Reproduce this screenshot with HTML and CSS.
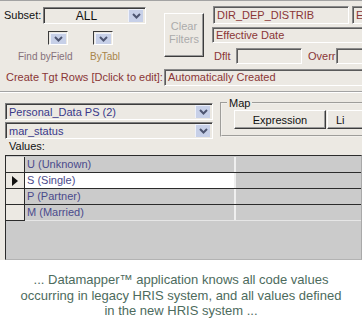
FILE: index.html
```html
<!DOCTYPE html>
<html lang="en">
<head>
  <meta charset="UTF-8" />
  <title>Datamapper</title>
  <link rel="stylesheet" href="styles.css">
</head>
<body>
  <div class="app">
    <div class="top">
      <div class="filters">
        <div class="subset-row">
          <span class="lbl subset-lbl">Subset:</span>
          <div class="combo subset">
            <span class="combo-text center">ALL</span>
            <span class="drop"><svg width="9" height="6" viewBox="0 0 9 6"><path d="M1 1 L4.5 4.5 L8 1" fill="none" stroke="#4e5672" stroke-width="2"/></svg></span>
          </div>
        </div>
        <div class="mini-row">
          <div class="mini"><span class="drop"><svg width="9" height="6" viewBox="0 0 9 6"><path d="M1 1 L4.5 4.5 L8 1" fill="none" stroke="#4e5672" stroke-width="2"/></svg></span></div>
          <div class="mini"><span class="drop"><svg width="9" height="6" viewBox="0 0 9 6"><path d="M1 1 L4.5 4.5 L8 1" fill="none" stroke="#4e5672" stroke-width="2"/></svg></span></div>
        </div>
        <div class="mini-labels">
          <span class="find">Find byField</span>
          <span class="bytabl">ByTabl</span>
        </div>
      </div>

      <button class="btn clear" disabled>Clear<br>Filters</button>

      <div class="fields">
        <div class="field-row r1">
          <div class="field dir">DIR_DEP_DISTRIB</div>
          <div class="field e">E</div>
        </div>
        <div class="field eff">Effective Date</div>
        <div class="field-row r3">
          <span class="lbl red dflt-lbl">Dflt</span>
          <div class="field dflt"></div>
          <span class="lbl red overr-lbl">Overr</span>
          <div class="field ov"></div>
        </div>
      </div>
    </div>

    <div class="tgt-row">
      <span class="lbl red tgt-lbl">Create Tgt Rows [Dclick to edit]:</span>
      <div class="field auto">Automatically Created</div>
    </div>

    <div class="sep"></div>

    <div class="mid">
      <div class="combos">
        <div class="combo wide">
          <span class="combo-text blue">Personal_Data PS (2)</span>
          <span class="drop"><svg width="9" height="6" viewBox="0 0 9 6"><path d="M1 1 L4.5 4.5 L8 1" fill="none" stroke="#4e5672" stroke-width="2"/></svg></span>
        </div>
        <div class="combo wide">
          <span class="combo-text blue">mar_status</span>
          <span class="drop"><svg width="9" height="6" viewBox="0 0 9 6"><path d="M1 1 L4.5 4.5 L8 1" fill="none" stroke="#4e5672" stroke-width="2"/></svg></span>
        </div>
      </div>
      <fieldset class="map">
        <legend>Map</legend>
        <div class="map-btns">
          <button class="btn expr">Expression</button>
          <button class="btn li">Li</button>
        </div>
      </fieldset>
    </div>

    <div class="values-lbl">Values:</div>

    <div class="grid">
      <div class="row gray">
        <div class="sel"></div>
        <div class="c1">U (Unknown)</div>
        <div class="c2"></div>
      </div>
      <div class="row current">
        <div class="sel"><span class="arrow"></span></div>
        <div class="c1">S (Single)</div>
        <div class="c2"></div>
      </div>
      <div class="row">
        <div class="sel"></div>
        <div class="c1">P (Partner)</div>
        <div class="c2"></div>
      </div>
      <div class="row last">
        <div class="sel"></div>
        <div class="c1">M (Married)</div>
        <div class="c2"></div>
      </div>
    </div>
  </div>

  <p class="caption">
    ... Datamapper™ application knows all code values<br>
    occurring in legacy HRIS system, and all values defined<br>
    in the new HRIS system ...
  </p>
</body>
</html>
```

FILE: styles.css
```css
body {
  margin: 0;
  background: #fff;
  font-family: "Liberation Sans", Arial, sans-serif;
  width: 362px;
}

.app {
  width: 362px;
  height: 260px;
  box-sizing: border-box;
  background: #ece9e3;
  border-top: 1px solid #a3a3a3;
  overflow: hidden;
  font-size: 11px;
}

.lbl {
  line-height: 13px;
  white-space: nowrap;
}

.red {
  color: #8a3636;
}

/* top block */
.top {
  display: flex;
  align-items: flex-start;
}

.filters {
  flex: none;
  width: 160px;
  padding-top: 6px;
}

.subset-row {
  display: flex;
  align-items: center;
  padding-left: 4px;
}

.subset-lbl {
  width: 39px;
  color: #111;
}

.combo {
  display: flex;
  align-items: center;
  box-sizing: border-box;
  height: 17px;
  border: 1px solid;
  border-color: #7d7d7d #fff #fff #7d7d7d;
  box-shadow: inset 1px 1px 0 #3c3c3c;
  padding: 1px 2px 1px 1px;
}

.combo-text {
  flex: 1;
  line-height: 14px;
  padding-left: 2px;
  white-space: nowrap;
}

.combo-text.center {
  text-align: center;
  color: #111;
  font-size: 12px;
  padding-left: 0;
}

.combo-text.blue {
  color: #38388a;
}

.subset {
  width: 103px;
}

.drop {
  display: flex;
  align-items: center;
  justify-content: center;
  flex: none;
  width: 15px;
  height: 13px;
  box-sizing: border-box;
  background: #c7d0e8;
  border-top: 1px solid #eef1fa;
  border-left: 1px solid #eef1fa;
}

.mini-row {
  display: flex;
  gap: 25px;
  margin-top: 7px;
  padding-left: 48px;
}

.mini {
  display: flex;
  align-items: center;
  justify-content: center;
  box-sizing: border-box;
  width: 20px;
  height: 14px;
  border: 1px solid;
  border-color: #3c3c3c #fff #fff #3c3c3c;
}

.mini .drop {
  width: 16px;
  height: 11px;
}

.mini-labels {
  display: flex;
  margin-top: 5px;
  padding-left: 18px;
  font-size: 10px;
  line-height: 13px;
}

.find {
  width: 72px;
  color: #857079;
}

.bytabl {
  color: #a8854a;
}

.btn {
  font-family: "Liberation Sans", Arial, sans-serif;
  font-size: 11px;
  background: #ece9e3;
  border: 1px solid;
  border-color: #fff #3c3c3c #3c3c3c #fff;
  box-shadow: inset -1px -1px 0 #9a9a9a;
  padding: 0;
  color: #111;
}

.clear {
  flex: none;
  width: 40px;
  height: 44px;
  margin: 12px 0 0 4px;
  line-height: 13px;
  padding-bottom: 4px;
  color: #ababab;
}

.fields {
  flex: none;
  width: 170px;
  margin-left: 8px;
}

.field {
  box-sizing: border-box;
  border: 1px solid;
  border-color: #8a8a8a #fff #fff #8a8a8a;
  box-shadow: inset 1px 1px 0 #5a5a5a;
  color: #8a3636;
  padding: 0 3px;
  white-space: nowrap;
  overflow: hidden;
}

.field-row {
  display: flex;
  align-items: center;
}

.r1 {
  margin-top: 5px;
}

.r1 .field {
  height: 18px;
  line-height: 16px;
}

.dir {
  margin-left: 1px;
  width: 137px;
}

.e {
  margin-left: 3px;
  width: 30px;
  flex: none;
}

.eff {
  margin-top: 3px;
  height: 16px;
  line-height: 14px;
  width: 170px;
}

.r3 {
  margin-top: 5px;
}

.r3 .field {
  height: 16px;
  flex: none;
}

.dflt-lbl {
  margin-left: 2px;
  width: 22px;
}

.dflt {
  width: 66px;
}

.overr-lbl {
  margin-left: 6px;
  width: 28px;
}

.ov {
  width: 40px;
}

.tgt-row {
  display: flex;
  align-items: center;
  margin-top: 5px;
  padding-left: 6px;
}

.tgt-lbl {
  flex: none;
  width: 158px;
}

.auto {
  flex: none;
  width: 200px;
  height: 17px;
  line-height: 15px;
}

.sep {
  margin-top: 5px;
  border-top: 1px solid #a3a3a3;
  border-bottom: 1px solid #fff;
}

/* middle */
.mid {
  display: flex;
  align-items: flex-start;
  margin-top: 4px;
}

.combos {
  display: flex;
  flex-direction: column;
  gap: 2px;
  flex: none;
  width: 208px;
  margin: 6px 0 0 5px;
}

.wide {
  width: 208px;
}

.map {
  flex: none;
  width: 150px;
  margin: 0 0 0 7px;
  padding: 1px 0 6px 12px;
  border: 2px groove #f2f0ec;
  box-sizing: border-box;
}

.map legend {
  padding: 0 2px;
  margin-left: -7px;
  line-height: 12px;
  color: #111;
}

.map-btns {
  display: flex;
  gap: 1px;
}

.expr {
  width: 92px;
  height: 19px;
  flex: none;
}

.li {
  width: 60px;
  height: 19px;
  flex: none;
  text-align: left;
  padding-left: 8px;
}

.values-lbl {
  margin-top: 1px;
  padding-left: 9px;
  line-height: 13px;
  color: #111;
}

/* values grid */
.grid {
  box-sizing: border-box;
  height: 105px;
  margin: 2px 0 0 5px;
  background: #cbcbcb;
  border-left: 1px solid #2b2b2b;
  border-top: 1px solid #2b2b2b;
  border-right: 1px solid #a9a9a9;
  border-bottom: 1px solid #b3b3b3;
}

.row {
  display: flex;
  box-sizing: border-box;
  height: 16px;
  border-bottom: 1px solid #2b2b2b;
  color: #4a4a8c;
  line-height: 15px;
}

.row:first-child {
  height: 17px;
  padding-top: 1px;
}

.sel {
  display: flex;
  align-items: center;
  justify-content: center;
  flex: none;
  width: 19px;
  box-sizing: border-box;
  background: #ece9e3;
  border-right: 1px solid #2b2b2b;
}

.arrow {
  width: 0;
  height: 0;
  border-left: 6px solid #111;
  border-top: 5px solid transparent;
  border-bottom: 5px solid transparent;
}

.c1 {
  flex: none;
  width: 211px;
  padding-left: 2px;
  box-sizing: border-box;
  border-right: 2px solid #efefef;
  white-space: nowrap;
}

.c2 {
  flex: 1;
}

.current .c1 {
  background: #fff;
}

.row.last {
  border-bottom-color: #e6e6e6;
}

.row.last .sel {
  box-shadow: 0 1px 0 #2b2b2b;
}

.caption {
  margin: 0;
  padding-top: 12px;
  text-align: center;
  font-size: 13px;
  line-height: 15.5px;
  color: #4d6b5d;
}
```
